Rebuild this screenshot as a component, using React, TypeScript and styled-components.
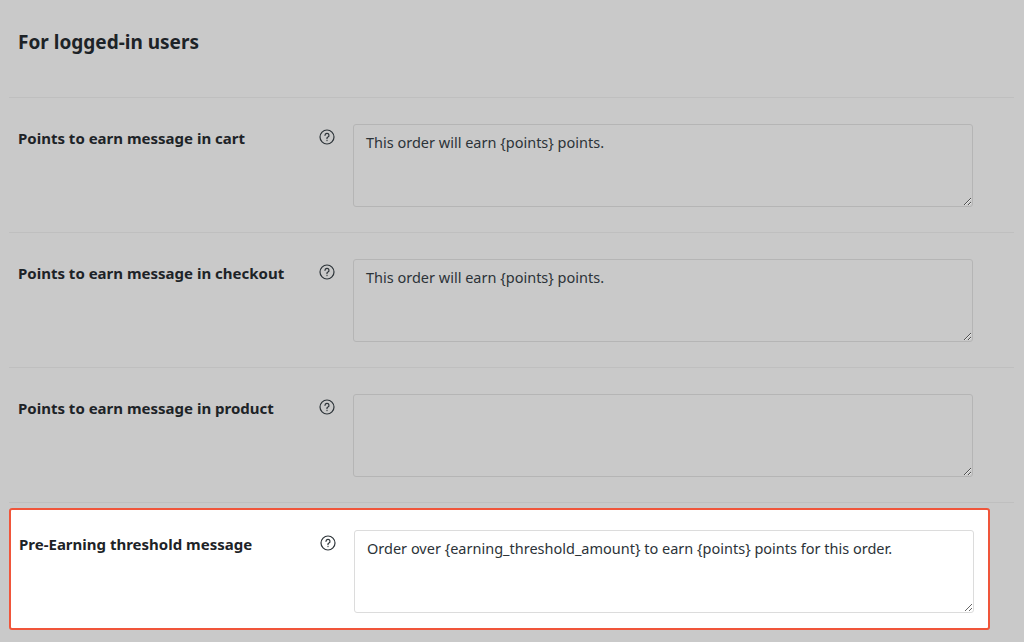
import React from "react";
import styled, { createGlobalStyle } from "styled-components";

const Global = createGlobalStyle`
  html, body { margin: 0; padding: 0; background: #c9c9c9; }
  body { font-family: -apple-system, "Noto Sans", "Liberation Sans", sans-serif; color: #1d2327; }
`;

const Page = styled.div`
  width: 1024px; height: 642px; overflow: hidden; box-sizing: border-box;
  padding: 0 10px 0 9px; background: #c9c9c9;
`;
const Heading = styled.h2`
  margin: 0; padding: 29px 0 0 9px; height: 97px; box-sizing: border-box;
  font-size: 19px; font-weight: 700; color: #1d2327;
`;
const Row = styled.div<{ $hl?: boolean }>`
  display: grid; grid-template-columns: 301px 34px 620px; align-items: start;
  box-sizing: border-box;
  border-top: 1px solid #bfbfbf;
  padding: 26px 0 25px 9px;
`;
const HlRow = styled(Row)`
  background: #fff; border: 2px solid #f0553a; border-radius: 3px;
  margin: 5px 24px 0 0; padding: 20px 0 15px 8px;
`;
const Sep = styled.div`
  border-top: 1px solid #bfbfbf;
`;
const Label = styled.div`
  font-size: 15px; font-weight: 700; line-height: 20px; padding-top: 4px; color: #1d2327;
`;
const Help = styled.div`
  padding-top: 5px; display: flex; color: #2c3338;
`;
const Area = styled.textarea<{ $hl?: boolean }>`
  width: 620px; height: 83px; box-sizing: border-box; resize: vertical;
  border: 1px solid ${p => (p.$hl ? "#dcdcdc" : "#b5b5b5")}; border-radius: 3px;
  background: transparent; padding: 8px 12px;
  font-family: inherit; font-size: 14.5px; color: #2c3338; line-height: 19px;
`;

const Q = () => (
  <svg width="16" height="16" viewBox="0 0 16 16" fill="none" stroke="currentColor" strokeWidth="1.2">
    <circle cx="8" cy="8" r="7" />
    <path d="M6 6.3a2 2 0 1 1 2.6 1.9c-.4.2-.6.5-.6.9v.6" strokeLinecap="round" />
    <circle cx="8" cy="11.6" r=".7" fill="currentColor" stroke="none" />
  </svg>
);

const rows = [
  { label: "Points to earn message in cart", value: "This order will earn {points} points." },
  { label: "Points to earn message in checkout", value: "This order will earn {points} points." },
  { label: "Points to earn message in product", value: "" },
];

export default function App() {
  return (
    <Page>
      <Global />
      <Heading>For logged-in users</Heading>
      {rows.map(r => (
        <Row key={r.label}>
          <Label>{r.label}</Label>
          <Help><Q /></Help>
          <Area defaultValue={r.value} />
        </Row>
      ))}
      <Sep />
      <HlRow>
        <Label>Pre-Earning threshold message</Label>
        <Help><Q /></Help>
        <Area $hl defaultValue="Order over {earning_threshold_amount} to earn {points} points for this order." />
      </HlRow>
    </Page>
  );
}
